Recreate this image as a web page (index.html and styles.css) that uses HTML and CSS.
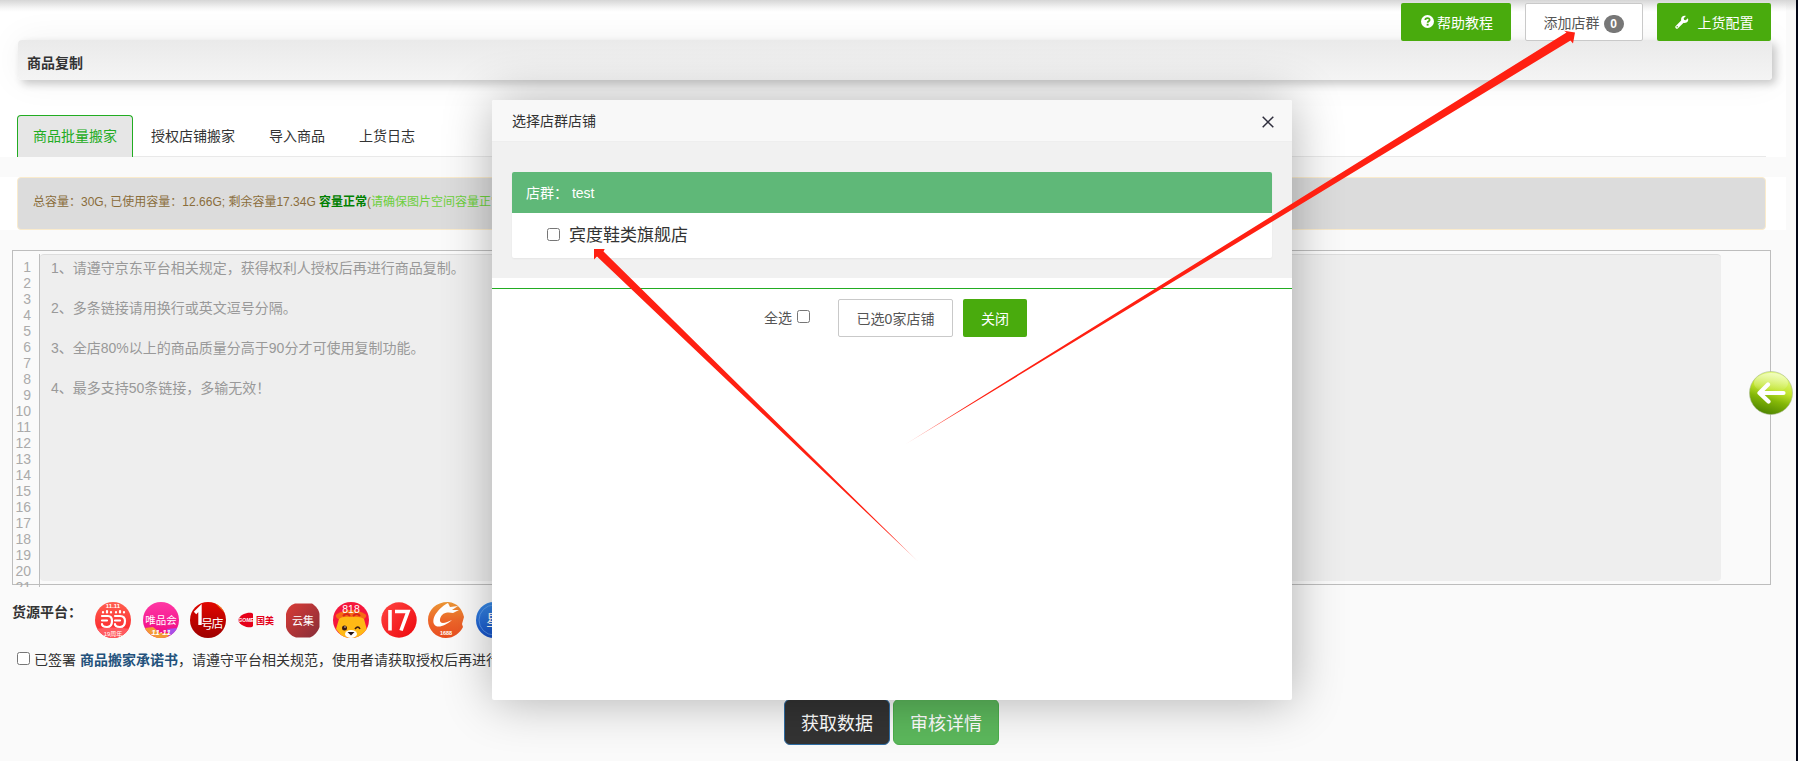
FILE: index.html
```
<!DOCTYPE html>
<html lang="zh-CN">
<head>
    <meta charset="UTF-8">
    <meta name="viewport" content="width=device-width, initial-scale=1.0">
    <title>商品复制</title>
    <link rel="stylesheet" href="styles.css">
</head>
<body>
    <div class="page">
        <div class="top-area">
            <div class="toolbar">
                <button class="btn btn-green btn-help">
                    <svg class="icon-help" viewBox="0 0 12 12" width="13" height="13"><circle cx="6" cy="6" r="6" fill="#fff"/><path d="M4 4.6C4 2.2 8 2.2 8 4.5C8 5.8 6.1 5.8 6.1 7.2" fill="none" stroke="#49ab0d" stroke-width="1.6"/><rect x="5.2" y="8.1" width="1.8" height="1.7" fill="#49ab0d"/></svg>
                    <span>帮助教程</span>
                </button>
                <button class="btn btn-line btn-group"><span>添加店群</span><span class="badge">0</span></button>
                <button class="btn btn-green btn-config">
                    <svg viewBox="0 0 14 14" width="14" height="14"><path d="M1.9 12.1L8 6" stroke="#fff" stroke-width="3.2" stroke-linecap="round"/><path d="M12.9 3.2L10.7 5.2L9 4.9L8.7 3.2L10.9 1.1C8.6 .2 5.8 1.8 6.1 4.8C6.3 7.4 9.2 8.8 11.5 7.5C13.2 6.5 13.7 4.7 12.9 3.2Z" fill="#fff"/><circle cx="2.2" cy="11.8" r=".7" fill="#49ab0d"/></svg>
                    <span>上货配置</span>
                </button>
            </div>
            <div class="panel-title">商品复制</div>
            <ul class="tabs">
                <li class="active">商品批量搬家</li>
                <li>授权店铺搬家</li>
                <li>导入商品</li>
                <li>上货日志</li>
            </ul>
        </div>

        <div class="alert-row">
            <div class="alert">总容量：30G, 已使用容量：12.66G; 剩余容量17.34G <b>容量正常</b>(<span class="tip">请确保图片空间容量正常</span>)</div>
        </div>

        <div class="editor">
            <div class="lines">1<br>2<br>3<br>4<br>5<br>6<br>7<br>8<br>9<br>10<br>11<br>12<br>13<br>14<br>15<br>16<br>17<br>18<br>19<br>20<br>21</div>
            <div class="textarea">
                <p>1、请遵守京东平台相关规定，获得权利人授权后再进行商品复制。</p>
                <p>2、多条链接请用换行或英文逗号分隔。</p>
                <p>3、全店80%以上的商品质量分高于90分才可使用复制功能。</p>
                <p>4、最多支持50条链接，多输无效！</p>
            </div>
        </div>

        <div class="platforms">
            <b>货源平台：</b>
            <div class="logos">
                <svg viewBox="0 0 36 36">
                    <defs><linearGradient id="dd" x2="0" y2="1"><stop offset="0" stop-color="#ff5f4f"/><stop offset="1" stop-color="#fb1f28"/></linearGradient><clipPath id="round"><circle cx="18" cy="18" r="18"/></clipPath></defs>
                    <g clip-path="url(#round)"><rect width="36" height="36" fill="url(#dd)"/><path d="M0 27Q18 24 36 27V36H0Z" fill="#ff5a60"/></g>
                    <text x="18" y="6" class="logo-text" font-size="6" font-weight="700">11.11</text>
                    <g fill="none" stroke="#fff" stroke-width="2.2" stroke-linecap="round"><path d="M7 14H13Q17 14 17 19Q17 25 12 25Q7 25 7 22M7 18.500H12M20 14H25Q30 14 30 19Q30 25 25 25Q20 25 20 22M20 18.500H25"/><path d="M8 10V10.500M12 9V10.500M16 10V10.500M21 10V10.500M25 9V10.500M29 10V10.500"/></g>
                    <text x="18" y="34" class="logo-text" font-size="6">19周年</text>
                </svg>
                <svg viewBox="0 0 36 36">
                    <defs><linearGradient id="vip" x2="0" y2="1"><stop offset="0" stop-color="#ff38a4"/><stop offset="1" stop-color="#ee0783"/></linearGradient></defs>
                    <g clip-path="url(#round)"><rect width="36" height="36" fill="url(#vip)"/><path d="M2 26L10 25L16 30L20 36H2Z" fill="#f39a35"/><path d="M34 26L24 27L26 34L34 32Z" fill="#a650e8"/><path d="M14 31H27L24 36H13Z" fill="#f39a35"/></g>
                    <text x="18" y="21.500" class="logo-text" font-size="10.500">唯品会</text>
                    <text x="18" y="33" class="logo-text" font-size="8" font-weight="700" font-style="italic">11·11</text>
                </svg>
                <svg viewBox="0 0 36 36">
                    <defs><linearGradient id="yhd" x2="0" y2="1"><stop offset="0" stop-color="#e10600"/><stop offset="1" stop-color="#9e0000"/></linearGradient></defs>
                    <g clip-path="url(#round)"><rect width="36" height="36" fill="url(#yhd)"/><path d="M24 0L36 12V0Z" fill="#f58422"/></g>
                    <path d="M5 11L10 6V23" fill="none" stroke="#fff" stroke-width="3.400"/>
                    <text x="17" y="27" class="logo-text" font-size="12">号</text>
                    <text x="27.500" y="26" class="logo-text" font-size="12">店</text>
                </svg>
                <svg viewBox="0 0 36 36">
                    <path d="M0 18C2 11 14 9 15 12V24C14 27 2 25 0 18Z" fill="#e50019"/>
                    <text x="8" y="20" class="logo-text" font-size="5" font-weight="700" font-style="italic">GOME</text>
                    <text x="27" y="21.500" class="logo-text gome" font-size="9" font-weight="700">国美</text>
                </svg>
                <svg viewBox="0 0 36 36">
                    <defs><linearGradient id="yj" x2="1" y2="1"><stop offset="0" stop-color="#d93b36"/><stop offset="1" stop-color="#872e39"/></linearGradient></defs>
                    <path d="M10 1.500H27C31 4 34 8 34.500 12V25C33 30 29 34 25 35.500H11C6 34 2 30 1 25V12C2 7 5 3 10 1.500Z" fill="url(#yj)"/>
                    <text x="18" y="23" class="logo-text" font-size="11">云集</text>
                </svg>
                <svg viewBox="0 0 36 36">
                    <g clip-path="url(#round)"><rect width="36" height="36" fill="#f5173c"/><path d="M4 12Q18 4 32 12Q35 14 31 17H5Q1 14 4 12Z" fill="#f66a13"/><path d="M6 17Q9 14 18 15Q27 14 31 17L34 28L25 36H10L3 27Z" fill="#ffb915"/><path d="M10 14Q14 10 17 14M20 14Q24 10 27 14" fill="none" stroke="#d9241b" stroke-width="2"/><ellipse cx="18" cy="32" rx="6" ry="4" fill="#fff"/></g>
                    <circle cx="11.500" cy="26" r="2.500" fill="#3c1b10"/><circle cx="12" cy="25" r=".7" fill="#fff"/>
                    <path d="M22 27Q25 23 27 27" fill="none" stroke="#3c1b10" stroke-width="1.500"/><path d="M14.500 30H21.500L18 33.500Z" fill="#241313"/>
                    <text x="18" y="11" class="logo-text" font-size="10.500">818</text>
                </svg>
                <svg viewBox="0 0 36 36">
                    <defs><linearGradient id="yq" x2="1" y2="1"><stop offset="0" stop-color="#ff4542"/><stop offset="1" stop-color="#ed070d"/></linearGradient></defs>
                    <circle cx="18" cy="18" r="17.700" fill="url(#yq)"/><path d="M9 8V28.500M14 9.500H27L20 28.500" fill="none" stroke="#fff" stroke-width="3.600"/>
                </svg>
                <svg viewBox="0 0 36 36">
                    <defs><linearGradient id="ali" x2="0" y2="1"><stop offset="0" stop-color="#eb9635"/><stop offset=".5" stop-color="#ed672a"/><stop offset="1" stop-color="#e94e20"/></linearGradient></defs>
                    <path d="M20 0C30 1 34 7 36 15L34 22L35 25C32 31 26 36 18 36C8 36 0 28 0 18C0 8 8 0 20 0Z" fill="url(#ali)"/>
                    <path d="M20 1C12 5 3 15 6 22C9 27 17 24 24 18C18 21 11 23 12 17C14 10 20 10 25 11L31 8L24 8L30 4L22 5Z" fill="#fff"/>
                    <text x="18" y="32.500" class="logo-text" font-size="5.500" font-weight="700">1688</text>
                </svg>
                <svg viewBox="0 0 36 36">
                    <defs><linearGradient id="xt" x2="0" y2="1"><stop offset="0" stop-color="#3789e5"/><stop offset="1" stop-color="#1450c8"/></linearGradient></defs>
                    <circle cx="18" cy="18" r="18" fill="url(#xt)"/><circle cx="18" cy="18" r="15" fill="none" stroke="#77aef2" stroke-width=".6"/>
                    <text x="18" y="24" class="logo-text" font-size="16">星</text>
                </svg>
            </div>
        </div>

        <div class="agree">
            <input type="checkbox">
            <span>已签署 <a>商品搬家承诺书</a>，请遵守平台相关规范，使用者请获取授权后再进行商品复制</span>
        </div>

        <div class="actions">
            <button class="btn-lg btn-dark">获取数据</button>
            <button class="btn-lg btn-success">审核详情</button>
        </div>
    </div>

    <svg class="side-arrow" viewBox="0 0 44 44">
        <defs>
            <linearGradient id="ball" x1=".65" y1="0" x2=".35" y2="1"><stop offset="0" stop-color="#e9ff8b"/><stop offset=".42" stop-color="#c0e42c"/><stop offset=".65" stop-color="#84b708"/><stop offset="1" stop-color="#4b8200"/></linearGradient>
            <linearGradient id="shine" x2="0" y2="1"><stop offset="0" stop-color="#fff" stop-opacity=".5"/><stop offset="1" stop-color="#fff" stop-opacity="0"/></linearGradient>
        </defs>
        <circle cx="22" cy="22" r="21.500" fill="url(#ball)" stroke="#a6b78b" stroke-width=".6"/>
        <ellipse cx="22" cy="12" rx="17" ry="10" fill="url(#shine)"/>
        <path d="M34.500 22H10.500M19 13.500L10.500 22L19.500 30.500" fill="none" stroke="#fff" stroke-width="4.200" stroke-linecap="round" stroke-linejoin="round"/>
    </svg>

    <div class="modal">
        <div class="modal-title">
            <span>选择店群店铺</span>
            <svg viewBox="0 0 12 12" width="12" height="12"><path d="M.7 .7L11.300 11.300M11.300 .7L.7 11.300" stroke="#2e2d3c" stroke-width="1.500"/></svg>
        </div>
        <div class="modal-body">
            <div class="card">
                <div class="card-header">店群： test</div>
                <label class="card-body"><input type="checkbox"><span>宾度鞋类旗舰店</span></label>
            </div>
        </div>
        <div class="modal-footer">
            <label class="check-all">全选<input type="checkbox"></label>
            <button class="btn btn-line btn-count">已选0家店铺</button>
            <button class="btn btn-green btn-close">关闭</button>
        </div>
    </div>

    <svg class="marks" viewBox="0 0 1798 761">
        <defs>
            <linearGradient id="fade1" gradientUnits="userSpaceOnUse" x1="906" y1="444" x2="965" y2="407"><stop offset="0" stop-color="#ff2012" stop-opacity=".4"/><stop offset="1" stop-color="#ff2012"/></linearGradient>
            <linearGradient id="fade2" gradientUnits="userSpaceOnUse" x1="918" y1="561" x2="893" y2="537"><stop offset="0" stop-color="#ff2012" stop-opacity=".4"/><stop offset="1" stop-color="#ff2012"/></linearGradient>
        </defs>
        <path d="M905 444.500L1566.500 32.500L1564 30.700L1575 32.500L1573 43.500L1570.500 40.500Z" fill="url(#fade1)"/>
        <path d="M918 561.500L597 256.500L594 259.500V249H604.700L603.500 251.500Z" fill="url(#fade2)"/>
    </svg>
</body>
</html>
```
FILE: styles.css
```
* {
    box-sizing: border-box;
}

body {
    margin: 0;
    height: 761px;
    overflow: hidden;
    position: relative;
    background: #fafafa;
    color: #333;
    font-family: "Liberation Sans", "Noto Sans CJK SC", sans-serif;
    font-size: 14px;
    line-height: 20px;
}

button {
    font-family: inherit;
    padding: 0;
}

input[type="checkbox"] {
    width: 13px;
    height: 13px;
    margin: 0;
    flex: none;
}

.page {
    height: 761px;
    border-right: 2px solid #030716;
    background: linear-gradient(#d6d6d6, #fafafa 11px);
}

/* top */
.top-area {
    width: 1786px;
    height: 157px;
    padding: 3px 14px 0 17px;
    background: linear-gradient(#d6d6d6, #f5f5f5 8px, #fff 12px);
    overflow: hidden;
}

.toolbar {
    display: flex;
    justify-content: flex-end;
    gap: 14px;
    height: 37px;
    padding-right: 1px;
    position: relative;
    z-index: 1;
}

.btn {
    display: flex;
    align-items: center;
    justify-content: center;
    height: 38px;
    border: none;
    border-radius: 2px;
    font-size: 14px;
    white-space: nowrap;
    flex: none;
}

.btn-green {
    background: #49ab0d;
    color: #fff;
}

.btn-line {
    background: #fff;
    border: 1px solid #c9c9c9;
    color: #555;
}

.btn-help {
    width: 110px;
    gap: 3px;
    padding: 0 0 1px 2px;
}

.btn-group {
    width: 118px;
    gap: 4px;
    padding-right: 1px;
}

.btn-config {
    width: 114px;
    gap: 9px;
    padding-bottom: 1px;
}

.badge {
    width: 20px;
    height: 18px;
    margin-top: 3px;
    border-radius: 9px;
    background: #777;
    color: #fff;
    font-size: 12px;
    font-weight: bold;
    line-height: 18px;
}

.panel-title {
    width: 1754px;
    height: 40px;
    margin-left: 1px;
    padding-left: 9px;
    border-radius: 4px;
    background: linear-gradient(#eaeaea, #f4f4f4);
    box-shadow: 4px 4px 8px rgba(0, 0, 0, .2), 0 0 36px rgba(0, 0, 0, .06);
    font-weight: bold;
    line-height: 46px;
}

.tabs {
    display: flex;
    width: 1749px;
    height: 42px;
    margin: 35px 0 0;
    padding: 0;
    border-bottom: 1px solid #e9e9e9;
    list-style: none;
}

.tabs li {
    height: 42px;
    margin-right: 2px;
    padding: 0 15px;
    border: 1px solid transparent;
    border-bottom: none;
    border-radius: 4px 4px 0 0;
    line-height: 41px;
}

.tabs .active {
    border-color: #22ac22;
    background: #e6e6e6;
    color: #22ac22;
}

.alert-row {
    width: 1786px;
    height: 53px;
    margin-top: 20px;
    padding-left: 17px;
    background: #fff;
}

.alert {
    width: 1749px;
    height: 53px;
    padding-left: 15px;
    border: 1px solid #faebcc;
    border-radius: 4px;
    background: #dcdcdc;
    color: #8a6d3b;
    font-size: 12px;
    line-height: 49px;
}

.alert b {
    color: #008000;
}

.alert .tip {
    color: #6ccf3c;
}

/* editor */
.editor {
    display: flex;
    width: 1759px;
    height: 335px;
    margin: 20px 0 0 12px;
    padding-top: 3px;
    border: 1px solid #bdbdbd;
}

.lines {
    width: 27px;
    height: 333px;
    padding: 5px 8px 0 0;
    border-right: 1px solid #bdbdbd;
    overflow: hidden;
    color: #aaa;
    line-height: 16px;
    text-align: right;
    flex: none;
}

.textarea {
    width: 1681px;
    height: 327px;
    padding: 3px 11px;
    border-top: 1px solid #ddd;
    border-radius: 4px;
    background: #eee;
    color: #999;
}

.textarea p {
    margin: 0 0 20px;
}

.platforms {
    display: flex;
    height: 36px;
    margin: 17px 0 0 12px;
}

.platforms b {
    width: 83px;
    flex: none;
}

.logos {
    display: flex;
    gap: 11.6px;
}

.logos svg {
    width: 36px;
    height: 36px;
    flex: none;
}

.logo-text {
    fill: #fff;
    text-anchor: middle;
}

.logo-text.gome {
    fill: #e50019;
}

.agree {
    display: flex;
    align-items: center;
    gap: 4px;
    height: 20px;
    margin: 12px 0 0 17px;
}

.agree input {
    margin-bottom: 3px;
}

.agree a {
    color: #23527c;
    font-weight: bold;
}

.actions {
    display: flex;
    justify-content: center;
    gap: 3px;
    margin-top: 29px;
    padding-right: 13px;
}

.btn-lg {
    width: 106px;
    height: 46px;
    border-radius: 6px;
    color: #fff;
    font-size: 18px;
}

.btn-dark {
    background: #333;
    border: 1px solid #2e6da4;
}

.btn-success {
    background: #5cb85c;
    border: 1px solid #4cae4c;
}

.side-arrow {
    position: absolute;
    top: 371px;
    right: 5px;
    width: 44px;
    height: 44px;
}

/* modal */
.modal {
    position: absolute;
    top: 100px;
    left: 492px;
    width: 800px;
    height: 600px;
    border-radius: 2px;
    background: #fff;
    box-shadow: 1px 1px 50px rgba(0, 0, 0, .3);
    z-index: 2;
}

.modal-title {
    display: flex;
    align-items: center;
    justify-content: space-between;
    height: 42px;
    padding: 0 18px 0 20px;
    border-bottom: 1px solid #eee;
    border-radius: 2px 2px 0 0;
    background: #f8f8f8;
}

.modal-title svg {
    margin-top: 3px;
}

.modal-body {
    height: 136px;
    padding: 30px 20px 20px;
    background: #f1f1f1;
}

.card {
    height: 86px;
    border-radius: 2px;
    background: #fff;
    box-shadow: 0 1px 2px rgba(0, 0, 0, .05);
    overflow: hidden;
}

.card-header {
    height: 41px;
    padding-left: 14px;
    background: #5fb878;
    color: #fff;
    line-height: 42px;
}

.card-body {
    display: flex;
    align-items: center;
    gap: 9px;
    height: 43px;
    padding-left: 35px;
    font-size: 17px;
}

.card-body span {
    margin-top: 2px;
}

.modal-footer {
    display: flex;
    height: 59px;
    margin-top: 10px;
    padding: 10px 0 0 272px;
    border-top: 1px solid #22ac22;
    color: #555;
}

.check-all {
    display: flex;
    gap: 5px;
    width: 74px;
    padding-top: 9px;
}

.check-all input {
    margin-top: 2px;
}

.btn-count {
    width: 115px;
    margin-right: 10px;
}

.btn-close {
    width: 64px;
}

/* red arrows drawn over the page */
.marks {
    position: absolute;
    top: 0;
    left: 0;
    width: 1798px;
    height: 761px;
    z-index: 3;
    pointer-events: none;
}
```
